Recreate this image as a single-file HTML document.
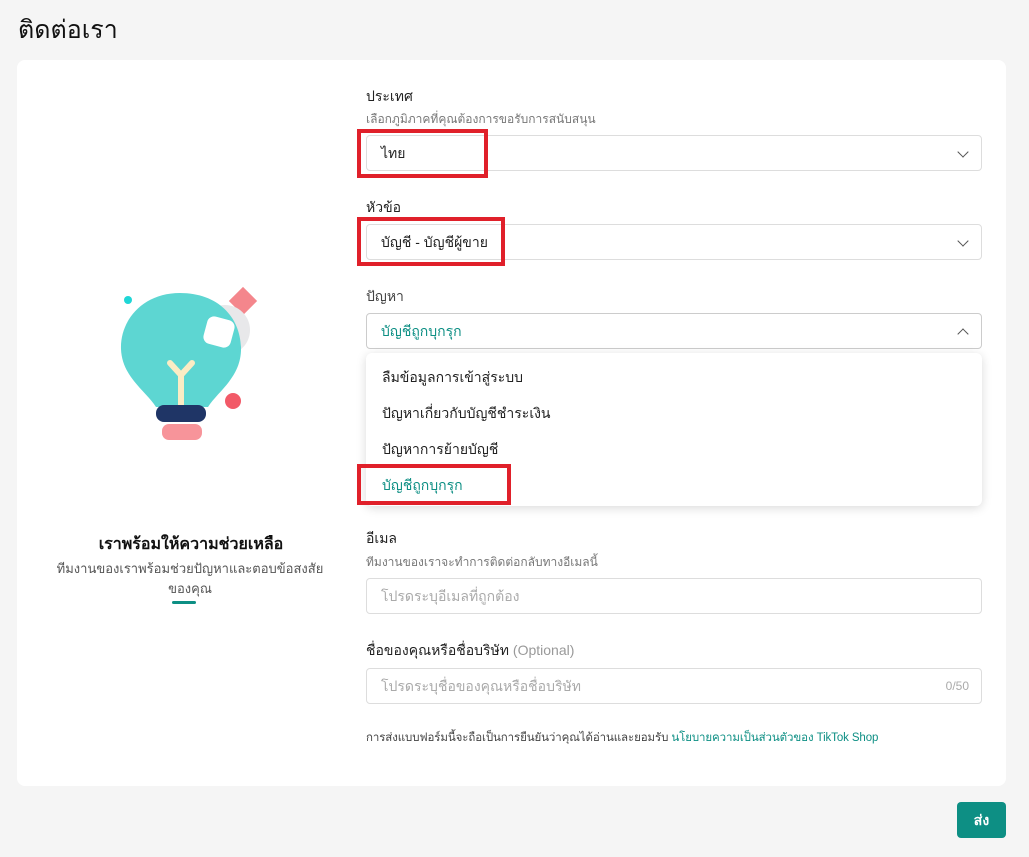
<!DOCTYPE html>
<html><head><meta charset="utf-8"><style>
*{box-sizing:border-box;margin:0;padding:0}
body{width:1029px;height:857px;background:#f5f5f5;font-family:"Liberation Sans","DejaVu Sans",sans-serif;color:#222;position:relative;overflow:hidden}
.a{position:absolute}
h1{position:absolute;left:18px;top:10px;font-size:25px;font-weight:400;color:#111}
.card{position:absolute;left:17px;top:60px;width:989px;height:726px;background:#fff;border-radius:8px}
.lbl{font-size:14px;color:#222}
.sub{font-size:12px;color:#777}
.inp{position:absolute;left:366px;width:616px;height:36px;border:1px solid #ddd;border-radius:4px;font-size:14px;padding:0 14px;line-height:34px}
.chev{position:absolute;right:14px;top:12px;width:8px;height:8px;border-right:1.5px solid #555;border-bottom:1.5px solid #555;transform:rotate(45deg)}
.up{transform:rotate(-135deg);top:16px}
.red{position:absolute;border:4px solid #e0202a}
.opt{position:absolute;left:382px;font-size:14px;color:#222}
</style></head><body>
<h1>ติดต่อเรา</h1>
<div class="card"></div>
<svg class="a" style="left:110px;top:285px" width="150" height="160" viewBox="0 0 150 160">
<circle cx="18" cy="15" r="4" fill="#1fd6d6"/>
<rect x="123" y="6" width="20" height="20" fill="#f4868c" transform="rotate(45 133 16)"/>
<circle cx="115" cy="45" r="25" fill="#e8e8ea"/>
<path d="M70 8 C32 8 10 36 11 64 C12 92 36 106 46 122 L98 122 C108 106 132 92 131 62 C130 32 108 8 70 8Z" fill="#5dd6d2"/>
<rect x="95" y="33" width="28" height="28" rx="7" fill="#fff" transform="rotate(15 109 47)"/>
<path d="M60 78 L71 90 L82 78 M71 90 L71 122" stroke="#fbecc4" stroke-width="6" fill="none" stroke-linecap="round"/>
<rect x="46" y="120" width="50" height="17" rx="8" fill="#1f3566"/>
<rect x="52" y="139" width="40" height="16" rx="7" fill="#f7949a"/>
<circle cx="123" cy="116" r="8" fill="#f25a68"/>
</svg>
<div class="a" style="left:17px;width:348px;top:532px;text-align:center;font-size:16px;font-weight:bold;color:#111">เราพร้อมให้ความช่วยเหลือ</div>
<div class="a" style="left:50px;width:280px;top:559px;text-align:center;font-size:13px;color:#555;line-height:20px">ทีมงานของเราพร้อมช่วยปัญหาและตอบข้อสงสัย<br>ของคุณ</div>
<div class="a" style="left:172px;top:601px;width:24px;height:3px;border-radius:2px;background:#0d8f84"></div>

<div class="a lbl" style="left:366px;top:86px">ประเทศ</div>
<div class="a sub" style="left:366px;top:110px">เลือกภูมิภาคที่คุณต้องการขอรับการสนับสนุน</div>
<div class="inp" style="top:135px">ไทย<div class="chev"></div></div>
<div class="a lbl" style="left:366px;top:197px">หัวข้อ</div>
<div class="inp" style="top:224px">บัญชี - บัญชีผู้ขาย<div class="chev"></div></div>
<div class="a lbl" style="left:366px;top:286px;color:#444">ปัญหา</div>
<div class="inp" style="top:313px;color:#0d8f84;border-color:#ccc">บัญชีถูกบุกรุก<div class="chev up"></div></div>
<div class="a" style="left:366px;top:353px;width:616px;height:153px;background:#fff;border-radius:6px;box-shadow:0 2px 10px rgba(0,0,0,.15)"></div>
<div class="opt" style="top:367px">ลืมข้อมูลการเข้าสู่ระบบ</div>
<div class="opt" style="top:403px">ปัญหาเกี่ยวกับบัญชีชำระเงิน</div>
<div class="opt" style="top:439px">ปัญหาการย้ายบัญชี</div>
<div class="opt" style="top:475px;color:#0d8f84">บัญชีถูกบุกรุก</div>
<div class="a lbl" style="left:366px;top:528px">อีเมล</div>
<div class="a sub" style="left:366px;top:553px">ทีมงานของเราจะทำการติดต่อกลับทางอีเมลนี้</div>
<div class="inp" style="top:578px;color:#aaa">โปรดระบุอีเมลที่ถูกต้อง</div>
<div class="a lbl" style="left:366px;top:640px">ชื่อของคุณหรือชื่อบริษัท <span style="color:#999">(Optional)</span></div>
<div class="inp" style="top:668px;color:#aaa">โปรดระบุชื่อของคุณหรือชื่อบริษัท<span style="position:absolute;right:12px;font-size:12px">0/50</span></div>
<div class="a" style="left:366px;top:729px;font-size:11.5px;color:#444;letter-spacing:-0.1px">การส่งแบบฟอร์มนี้จะถือเป็นการยืนยันว่าคุณได้อ่านและยอมรับ <span style="color:#0d8f84">นโยบายความเป็นส่วนตัวของ TikTok Shop</span></div>
<div class="a" style="left:957px;top:802px;width:49px;height:36px;background:#0d8f84;border-radius:4px;color:#fff;font-size:14px;font-weight:bold;text-align:center;line-height:36px">ส่ง</div>

<div class="red" style="left:357px;top:129px;width:131px;height:49px"></div>
<div class="red" style="left:357px;top:217px;width:148px;height:49px"></div>
<div class="red" style="left:357px;top:464px;width:154px;height:41px"></div>
</body></html>
